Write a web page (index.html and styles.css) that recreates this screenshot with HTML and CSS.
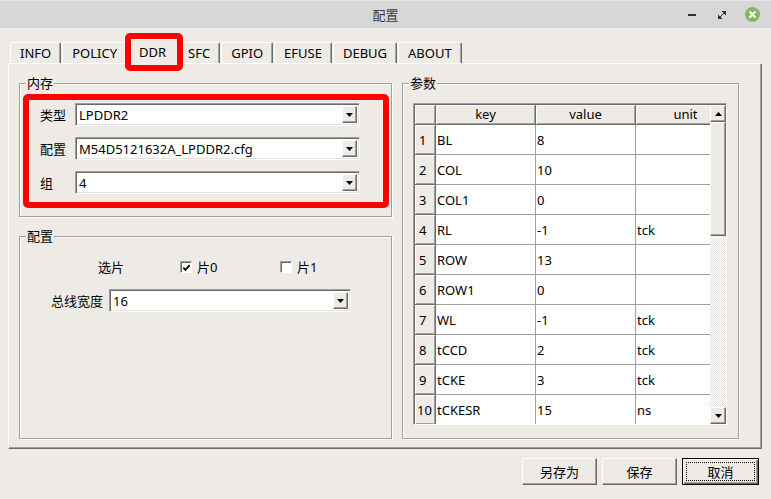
FILE: index.html
```html
<!DOCTYPE html>
<html lang="zh">
<head>
<meta charset="utf-8">
<title>配置</title>
<link rel="stylesheet" href="styles.css">
</head>
<body>
<div class="window">
  <header class="titlebar">
    <div class="title">配置</div>
    <div class="controls">
      <div class="ctl"><svg width="8" height="2" viewBox="0 0 8 2"><rect width="8" height="2" fill="#2d2d2d"/></svg></div>
      <div class="ctl"><svg width="8" height="8" viewBox="0 0 8 8"><path d="M3.5 0H8V4.5Z M0 3.5V8H4.5Z" fill="#2d2d2d"/><path d="M1.5 6.5L6.5 1.5" stroke="#2d2d2d" stroke-width="1"/></svg></div>
      <div class="ctl"><svg width="15" height="15" viewBox="0 0 15 15"><circle cx="7.5" cy="7.5" r="7.5" fill="#88b560"/><path d="M5 5L10 10M10 5L5 10" stroke="#fff" stroke-width="2" stroke-linecap="round"/></svg></div>
    </div>
  </header>

  <div class="main">
    <nav class="tabs">
      <div class="tab">INFO</div>
      <div class="tab">POLICY</div>
      <div class="tab active">DDR</div>
      <div class="tab">SFC</div>
      <div class="tab">GPIO</div>
      <div class="tab">EFUSE</div>
      <div class="tab">DEBUG</div>
      <div class="tab">ABOUT</div>
      <span class="mark mark-tab"></span>
    </nav>

    <section class="pane">
      <div class="left-col">
        <div class="group group-mem">
          <div class="group-title">内存</div>
          <div class="form">
            <label class="lbl">类型</label>
            <div class="combo"><span class="val">LPDDR2</span><span class="dd"><svg width="7" height="4" viewBox="0 0 7 4"><path d="M0 0H7L3.5 4Z" fill="#000"/></svg></span></div>
            <label class="lbl">配置</label>
            <div class="combo"><span class="val">M54D5121632A_LPDDR2.cfg</span><span class="dd"><svg width="7" height="4" viewBox="0 0 7 4"><path d="M0 0H7L3.5 4Z" fill="#000"/></svg></span></div>
            <label class="lbl">组</label>
            <div class="combo"><span class="val">4</span><span class="dd"><svg width="7" height="4" viewBox="0 0 7 4"><path d="M0 0H7L3.5 4Z" fill="#000"/></svg></span></div>
          </div>
          <span class="mark mark-mem"></span>
        </div>

        <div class="group group-cfg">
          <div class="group-title">配置</div>
          <div class="chip-row">
            <span class="lbl">选片</span>
            <span class="check"><span class="box"><svg width="10" height="10" viewBox="0 0 10 10"><path d="M1.5 4.5L3.8 7L8.5 1.8" stroke="#000" stroke-width="2" fill="none"/></svg></span>片0</span>
            <span class="check"><span class="box"></span>片1</span>
          </div>
          <div class="bus-row">
            <span class="lbl">总线宽度</span>
            <div class="combo combo-bus"><span class="val">16</span><span class="dd"><svg width="7" height="4" viewBox="0 0 7 4"><path d="M0 0H7L3.5 4Z" fill="#000"/></svg></span></div>
          </div>
        </div>
      </div>

      <div class="group group-params">
        <div class="group-title">参数</div>
        <div class="table-frame">
          <div class="table-view">
            <div class="grid">
              <div class="hc corner"></div><div class="hc">key</div><div class="hc">value</div><div class="hc">unit</div>
              <div class="rh">1</div><div class="c">BL</div><div class="c">8</div><div class="c"></div>
              <div class="rh">2</div><div class="c">COL</div><div class="c">10</div><div class="c"></div>
              <div class="rh">3</div><div class="c">COL1</div><div class="c">0</div><div class="c"></div>
              <div class="rh">4</div><div class="c">RL</div><div class="c">-1</div><div class="c">tck</div>
              <div class="rh">5</div><div class="c">ROW</div><div class="c">13</div><div class="c"></div>
              <div class="rh">6</div><div class="c">ROW1</div><div class="c">0</div><div class="c"></div>
              <div class="rh">7</div><div class="c">WL</div><div class="c">-1</div><div class="c">tck</div>
              <div class="rh">8</div><div class="c">tCCD</div><div class="c">2</div><div class="c">tck</div>
              <div class="rh">9</div><div class="c">tCKE</div><div class="c">3</div><div class="c">tck</div>
              <div class="rh">10</div><div class="c">tCKESR</div><div class="c">15</div><div class="c">ns</div>
            </div>
          </div>
          <div class="vscroll">
            <div class="sb-btn"><svg width="7" height="4" viewBox="0 0 7 4"><path d="M0 4H7L3.5 0Z" fill="#000"/></svg></div>
            <div class="sb-thumb"></div>
            <div class="sb-track"></div>
            <div class="sb-btn"><svg width="7" height="4" viewBox="0 0 7 4"><path d="M0 0H7L3.5 4Z" fill="#000"/></svg></div>
          </div>
        </div>
      </div>
    </section>

    <footer class="buttons">
      <button class="btn">另存为</button>
      <button class="btn">保存</button>
      <button class="btn default">取消</button>
    </footer>
  </div>
</div>
</body>
</html>
```

FILE: styles.css
```css
* { box-sizing: border-box; }
html, body { margin: 0; padding: 0; }
body {
  width: 771px;
  height: 499px;
  overflow: hidden;
  background: #eeebe7;
  font-family: "Noto Sans", "Noto Sans CJK SC", sans-serif;
  font-size: 13px;
  color: #000;
}

/* title bar */
.titlebar {
  height: 28px;
  background: #d7d7d7;
  border-top: 1px solid #e6e6e6;
  display: grid;
  grid-template-columns: 1fr auto 1fr;
  align-items: center;
}
.title { grid-column: 2; font-size: 13px; color: #3a3a3a; line-height: 16px; }
.controls { grid-column: 3; justify-self: end; display: flex; gap: 8px; padding-right: 8px; }
.ctl { width: 22px; height: 16px; display: flex; align-items: center; justify-content: center; }

/* main */
.main { padding: 0 9px 0 8px; }

/* tabs */
.tabs {
  height: 35px;
  display: flex;
  align-items: flex-end;
  padding-left: 2px;
  position: relative;
  z-index: 1;
}
.tab {
  height: 21px;
  padding: 0 9px;
  border: 1px solid;
  border-color: #fff #6e6e6e transparent #fff;
  border-bottom: none;
  border-radius: 2px 2px 0 0;
  box-shadow: inset -1px 0 0 #a0a0a0;
  line-height: 20px;
  margin-right: 1px;
  background: #eeebe7;
  white-space: nowrap;
}
.tab.active {
  height: 25px;
  margin: 0 -1px -1px -2px;
  padding: 0 12px;
  line-height: 24px;
  position: relative;
  z-index: 2;
}

/* red annotation marks */
.mark {
  position: absolute;
  border: 6px solid #ff0000;
  border-radius: 5px;
  pointer-events: none;
  z-index: 5;
}
.mark-tab { left: 117px; top: 5px; width: 58px; height: 38px; }
.mark-mem { left: 3px; top: 10px; width: 366px; height: 114px; }

/* pane */
.pane {
  height: 386px;
  border: 1px solid;
  border-color: #fff #6e6e6e #6e6e6e #fff;
  box-shadow: inset -1px -1px 0 #a0a0a0;
  display: grid;
  grid-template-columns: 373px 337px;
  column-gap: 10px;
  align-items: start;
  padding: 19px 0 0 10px;
}

/* group boxes */
.group {
  border: 1px solid #a0a0a0;
  box-shadow: inset 1px 1px 0 #fff, 1px 1px 0 #fff;
  position: relative;
}
.group-title {
  margin: -9px 0 0 6px;
  padding: 0 1px;
  width: fit-content;
  background: #eeebe7;
  line-height: 16px;
}

.group-mem { height: 134px; }
.form {
  display: grid;
  grid-template-columns: 35px 285px;
  grid-auto-rows: 23px;
  row-gap: 11px;
  align-items: center;
  margin-top: 12px;
  padding-left: 20px;
}
.lbl { line-height: 16px; white-space: nowrap; }

/* combo box */
.combo {
  height: 23px;
  background: #fff;
  border: 1px solid;
  border-color: #a0a0a0 #fff #fff #a0a0a0;
  box-shadow: inset 1px 1px 0 #696969, inset -1px -1px 0 #e3e3e3;
  display: flex;
  align-items: stretch;
  padding: 2px;
}
.combo .val { flex: 1; padding-left: 1px; line-height: 19px; white-space: nowrap; overflow: hidden; }
.dd {
  width: 15px;
  background: #eeebe7;
  border: 1px solid;
  border-color: #fff #696969 #696969 #fff;
  box-shadow: inset -1px -1px 0 #a0a0a0;
  display: flex;
  align-items: center;
  justify-content: center;
}

/* config group */
.group-cfg { margin-top: 19px; height: 203px; }
.chip-row {
  display: grid;
  grid-template-columns: 82px 100px auto;
  align-items: center;
  height: 16px;
  margin-top: 15px;
  padding-left: 78px;
}
.check { display: flex; align-items: center; gap: 5px; line-height: 16px; }
.box {
  width: 12px;
  height: 12px;
  background: #fff;
  border: 1px solid;
  border-color: #a0a0a0 #fff #fff #a0a0a0;
  box-shadow: inset 1px 1px 0 #696969;
  display: flex;
  align-items: center;
  justify-content: center;
  padding: 1px 0 0 1px;
}
.bus-row {
  display: grid;
  grid-template-columns: 58px 242px;
  align-items: center;
  margin-top: 14px;
  padding-left: 31px;
}

/* params group */
.group-params { height: 356px; }
.table-frame {
  margin: 12px 0 0 10px;
  width: 314px;
  height: 322px;
  border: 1px solid;
  border-color: #a0a0a0 #fff #fff #a0a0a0;
  box-shadow: inset 1px 1px 0 #696969;
  display: flex;
  padding: 1px 0 0 1px;
}
.table-view { width: 296px; overflow: hidden; background: #fff; }
.grid {
  display: grid;
  grid-template-columns: 21px 100px 100px 100px;
  grid-template-rows: 20px;
  grid-auto-rows: 30px;
  width: 321px;
}
.hc, .rh {
  background: #eeebe7;
  border-right: 1px solid #6e6e6e;
  border-bottom: 1px solid #6e6e6e;
  box-shadow: inset 1px 1px 0 #fff, inset -1px -1px 0 #a0a0a0;
  white-space: nowrap;
}
.hc { text-align: center; line-height: 19px; }
.rh { padding: 1px 0 0 4px; line-height: 28px; }
.rh:nth-child(n+41) { padding-left: 2px; }
.c {
  border-right: 1px solid #a0a0a0;
  border-bottom: 1px solid #a0a0a0;
  padding: 1px 0 0 1px;
  line-height: 28px;
  white-space: nowrap;
}

/* scrollbar */
.vscroll { width: 16px; display: flex; flex-direction: column; }
.sb-btn, .sb-thumb {
  background: #eeebe7;
  border: 1px solid;
  border-color: #fff #696969 #696969 #fff;
  box-shadow: inset -1px -1px 0 #a0a0a0;
}
.sb-btn { height: 17px; display: flex; align-items: center; justify-content: center; }
.sb-thumb { height: 114px; }
.sb-track {
  flex: 1;
  background: repeating-conic-gradient(#ffffff 0 25%, #e6e3df 0 50%) 0 0 / 2px 2px;
}

/* buttons */
.buttons {
  display: flex;
  justify-content: flex-end;
  gap: 5px;
  margin-top: 9px;
  padding-right: 3px;
}
.btn {
  width: 75px;
  height: 27px;
  font: inherit;
  color: #000;
  background: #eeebe7;
  border: 1px solid;
  border-color: #fff #696969 #696969 #fff;
  box-shadow: inset -1px -1px 0 #a0a0a0;
  padding: 0;
}
.btn.default {
  width: 77px;
  border: 1px solid #000;
  box-shadow: inset 1px 1px 0 #fff, inset -1px -1px 0 #696969, inset -2px -2px 0 #a0a0a0;
  outline: 1px dotted #000;
  outline-offset: -5px;
}
```
